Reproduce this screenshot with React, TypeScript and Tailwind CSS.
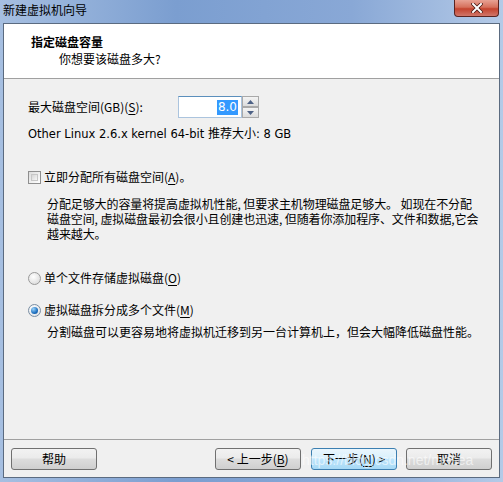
import React from "react";

const cjk = { fontFamily: '"Noto Sans CJK SC", "Noto Sans", sans-serif' };

function WinButton({ label, focused }: { label: React.ReactNode; focused?: boolean }) {
  return (
    <button
      className={
        "h-[22px] w-[86px] rounded-[3px] border text-[12px] leading-none text-black " +
        (focused
          ? "border-[#3c7fb1] bg-[linear-gradient(#eaf6fd_0%,#d9f0fc_45%,#bee6fd_50%,#a7d9f5_100%)]"
          : "border-[#707070] bg-[linear-gradient(#f2f2f2_0%,#ebebeb_45%,#dddddd_50%,#cfcfcf_100%)]")
      }
    >
      {label}
    </button>
  );
}

function U({ children }: { children: React.ReactNode }) {
  return <span className="underline underline-offset-2">{children}</span>;
}

export default function App() {
  return (
    <div
      className="flex h-[482px] w-[503px] flex-col overflow-hidden bg-[linear-gradient(90deg,#a6bfe1_0%,#7b9ed0_35%,#89a8d6_70%,#b4cae7_100%)] text-[12px] text-black"
      style={cjk}
    >
      {/* title bar */}
      <div className="flex h-[23px] shrink-0 items-start justify-between">
        <span className="pl-[3px] pt-[2px] text-[12px] leading-[16px] text-black">新建虚拟机向导</span>
        <div className="mr-[4px] flex h-[17px] w-[45px] items-center justify-center rounded-b-[4px] border border-t-0 border-[#5a2320] bg-[linear-gradient(#e8a294_0%,#d6705c_45%,#c4432e_55%,#d0766a_100%)]">
          <svg width="12" height="10" viewBox="0 0 12 10">
            <path d="M2 1 L10 9 M10 1 L2 9" stroke="#4a1a14" strokeWidth="3.6" strokeLinecap="square" />
            <path d="M2 1 L10 9 M10 1 L2 9" stroke="#ffffff" strokeWidth="2" strokeLinecap="square" />
          </svg>
        </div>
      </div>

      {/* client area */}
      <div className="mx-[3px] mb-[4px] flex flex-1 flex-col border border-[#5b6b80] bg-[#f0f0f0]">
        {/* header */}
        <div className="flex h-[55px] shrink-0 flex-col border-b border-[#a0a0a0] bg-white pl-[27px] pt-[10px]">
          <span className="text-[12px] font-bold leading-[16px]">指定磁盘容量</span>
          <span className="pl-[28px] pt-[1px] text-[12px] leading-[16px]">你想要该磁盘多大?</span>
        </div>

        {/* body */}
        <div className="flex flex-1 flex-col pl-[24px]">
          <div className="mt-[17px] flex h-[22px] items-center">
            <span className="w-[150px] leading-[16px]">
              最大磁盘空间(GB)(<U>S</U>):
            </span>
            <div className="flex h-[22px] w-[64px] items-center justify-end border border-[#abc4de] border-t-[#5b8fbc] bg-white pr-[3px]">
              <span className="bg-[#3399ff] px-[1px] leading-[15px] text-white" style={{ fontFamily: '"DejaVu Sans", sans-serif' }}>
                8.0
              </span>
            </div>
            <div className="flex h-[22px] w-[17px] flex-col justify-between">
              <div className="flex h-[11px] items-center justify-center border border-[#a9a9a9] bg-[linear-gradient(#f4f4f4,#dcdcdc)]">
                <svg width="7" height="4" viewBox="0 0 7 4"><path d="M0 4 L3.5 0 L7 4 Z" fill="#4d6185" /></svg>
              </div>
              <div className="flex h-[11px] items-center justify-center border border-[#a9a9a9] bg-[linear-gradient(#f4f4f4,#dcdcdc)]">
                <svg width="7" height="4" viewBox="0 0 7 4"><path d="M0 0 L7 0 L3.5 4 Z" fill="#4d6185" /></svg>
              </div>
            </div>
          </div>

          <div className="mt-[7px] leading-[16px]">
            <span style={{ fontFamily: '"DejaVu Sans", sans-serif' }} className="text-[11.5px]">Other Linux 2.6.x kernel 64-bit </span>
            推荐大小<span style={{ fontFamily: '"DejaVu Sans", sans-serif' }} className="text-[11.5px]">: 8 GB</span>
          </div>

          {/* allocate now */}
          <div className="mt-[27px] flex items-center gap-[3px] leading-[16px]">
            <span className="inline-block h-[13px] w-[13px] border border-[#8f8f8f] bg-[linear-gradient(135deg,#dcdcdc,#ffffff)] p-[2px]">
              <span className="block h-full w-full border border-[#c7c7c7] bg-[linear-gradient(135deg,#d6d6d6,#f6f6f6)]" />
            </span>
            <span>
              立即分配所有磁盘空间(<U>A</U>)。
            </span>
          </div>
          <p className="mt-[11px] pl-[19px] text-[12px] leading-[15px] tracking-[-0.1px]">
            分配足够大的容量将提高虚拟机性能, 但要求主机物理磁盘足够大。 如现在不分配
            <br />
            磁盘空间, 虚拟磁盘最初会很小且创建也迅速, 但随着你添加程序、文件和数据,它会
            <br />
            越来越大。
          </p>

          {/* radio options */}
          <div className="mt-[29px] flex items-center gap-[3px] leading-[16px]">
            <span className="inline-block h-[13px] w-[13px] rounded-full border border-[#999999] bg-[radial-gradient(circle_at_40%_35%,#ffffff,#d4d4d4)]" />
            <span>
              单个文件存储虚拟磁盘(<U>O</U>)
            </span>
          </div>
          <div className="mt-[16px] flex items-center gap-[3px] leading-[16px]">
            <span className="flex h-[13px] w-[13px] items-center justify-center rounded-full border border-[#7a8ea3] bg-[radial-gradient(circle_at_40%_35%,#ffffff,#d9dde2)]">
              <span className="block h-[7px] w-[7px] rounded-full bg-[radial-gradient(circle_at_35%_30%,#9ad4fb,#1d6fbf_60%,#0b4a8f)]" />
            </span>
            <span>
              虚拟磁盘拆分成多个文件(<U>M</U>)
            </span>
          </div>
          <p className="mt-[6px] pl-[19px] leading-[16px]">
            分割磁盘可以更容易地将虚拟机迁移到另一台计算机上，但会大幅降低磁盘性能。
          </p>
        </div>

        {/* footer */}
        <div className="relative flex h-[38px] shrink-0 items-center border-t border-[#a0a0a0] pl-[7px] pr-[7px] pt-[1px]">
          <WinButton label="帮助" />
          <div className="ml-auto flex gap-[9px]">
            <div className="flex gap-[10px]">
              <WinButton label={<>&lt; 上一步(<U>B</U>)</>} />
              <WinButton focused label={<>下一步(<U>N</U>) &gt;</>} />
            </div>
            <WinButton label="取消" />
          </div>
          <span
            className="pointer-events-none absolute left-[298px] top-[12px] text-[14px] leading-[16px] text-white/60"
            style={{ fontFamily: '"Liberation Sans", sans-serif' }}
          >
            https://blog.csdn.net/mesea
          </span>
        </div>
      </div>
    </div>
  );
}
